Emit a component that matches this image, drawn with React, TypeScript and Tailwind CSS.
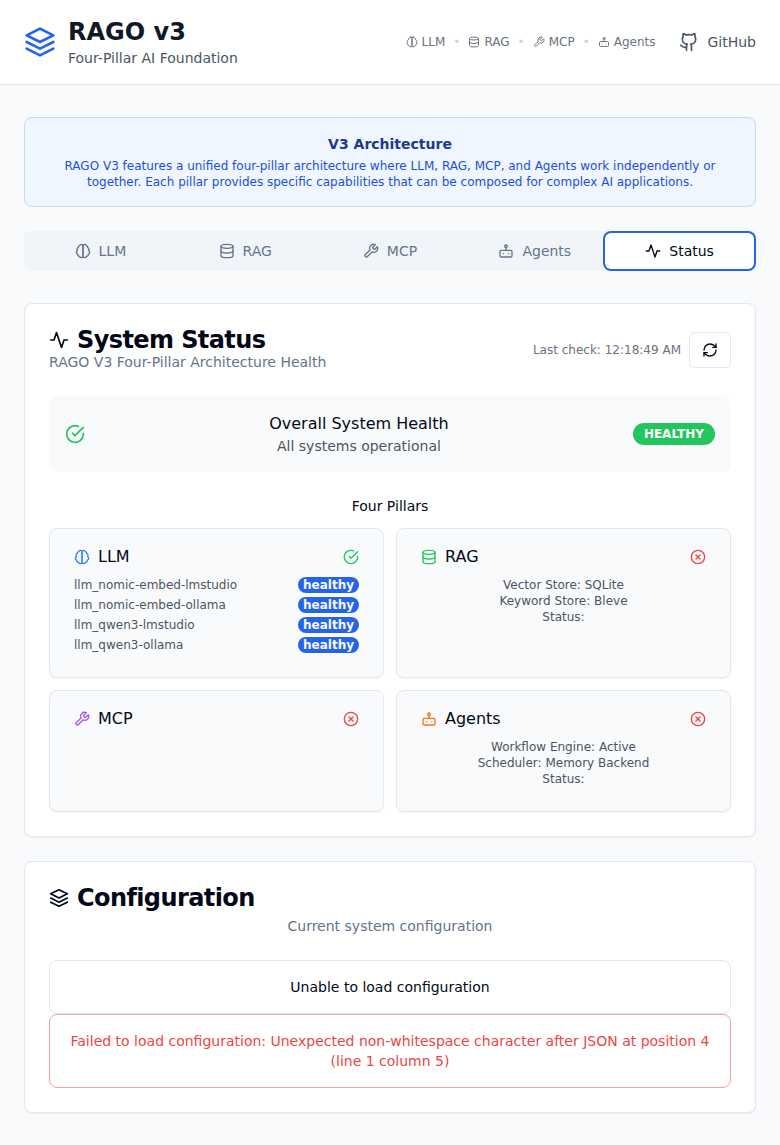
import type { ReactNode } from 'react'

type IconProps = { className?: string }

function Svg({ className = '', children }: IconProps & { children: ReactNode }) {
  return (
    <svg
      viewBox="0 0 24 24"
      fill="none"
      stroke="currentColor"
      strokeWidth={2}
      strokeLinecap="round"
      strokeLinejoin="round"
      className={`shrink-0 ${className}`}
    >
      {children}
    </svg>
  )
}

const Layers = ({ className }: IconProps) => (
  <Svg className={className}>
    <polygon points="12 2 2 7 12 12 22 7 12 2" />
    <polyline points="2 17 12 22 22 17" />
    <polyline points="2 12 12 17 22 12" />
  </Svg>
)

const Brain = ({ className }: IconProps) => (
  <Svg className={className}>
    <path d="M9.5 2A2.5 2.5 0 0 1 12 4.5v15a2.5 2.5 0 0 1-4.96.44 2.5 2.5 0 0 1-2.96-3.08 3 3 0 0 1-.34-5.58 2.5 2.5 0 0 1 1.32-4.24 2.5 2.5 0 0 1 1.98-3A2.5 2.5 0 0 1 9.5 2Z" />
    <path d="M14.5 2A2.5 2.5 0 0 0 12 4.5v15a2.5 2.5 0 0 0 4.96.44 2.5 2.5 0 0 0 2.96-3.08 3 3 0 0 0 .34-5.58 2.5 2.5 0 0 0-1.32-4.24 2.5 2.5 0 0 0-1.98-3A2.5 2.5 0 0 0 14.5 2Z" />
  </Svg>
)

const Database = ({ className }: IconProps) => (
  <Svg className={className}>
    <ellipse cx="12" cy="5" rx="9" ry="3" />
    <path d="M3 5V19A9 3 0 0 0 21 19V5" />
    <path d="M3 12A9 3 0 0 0 21 12" />
  </Svg>
)

const Wrench = ({ className }: IconProps) => (
  <Svg className={className}>
    <path d="M14.7 6.3a1 1 0 0 0 0 1.4l1.6 1.6a1 1 0 0 0 1.4 0l3.77-3.77a6 6 0 0 1-7.94 7.94l-6.91 6.91a2.12 2.12 0 0 1-3-3l6.91-6.91a6 6 0 0 1 7.94-7.94l-3.76 3.76z" />
  </Svg>
)

const Bot = ({ className }: IconProps) => (
  <Svg className={className}>
    <rect width="18" height="10" x="3" y="11" rx="2" />
    <circle cx="12" cy="5" r="2" />
    <path d="M12 7v4" />
    <line x1="8" x2="8" y1="16" y2="16" />
    <line x1="16" x2="16" y1="16" y2="16" />
  </Svg>
)

const Activity = ({ className }: IconProps) => (
  <Svg className={className}>
    <path d="M22 12h-4l-3 9L9 3l-3 9H2" />
  </Svg>
)

const CheckCircle = ({ className }: IconProps) => (
  <Svg className={className}>
    <path d="M22 11.08V12a10 10 0 1 1-5.93-9.14" />
    <path d="m9 11 3 3L22 4" />
  </Svg>
)

const XCircle = ({ className }: IconProps) => (
  <Svg className={className}>
    <circle cx="12" cy="12" r="10" />
    <path d="m15 9-6 6" />
    <path d="m9 9 6 6" />
  </Svg>
)

const Refresh = ({ className }: IconProps) => (
  <Svg className={className}>
    <path d="M3 12a9 9 0 0 1 9-9 9.75 9.75 0 0 1 6.74 2.74L21 8" />
    <path d="M21 3v5h-5" />
    <path d="M21 12a9 9 0 0 1-9 9 9.75 9.75 0 0 1-6.74-2.74L3 16" />
    <path d="M8 16H3v5" />
  </Svg>
)

const Github = ({ className }: IconProps) => (
  <Svg className={className}>
    <path d="M15 22v-4a4.8 4.8 0 0 0-1-3.5c3 0 6-2 6-5.5.08-1.25-.27-2.48-1-3.5.28-1.15.28-2.35 0-3.5 0 0-1 0-3 1.5-2.64-.5-5.36-.5-8 0C6 2 5 2 5 2c-.3 1.15-.3 2.35 0 3.5A5.403 5.403 0 0 0 4 9c0 3.5 3 5.5 6 5.5-.39.49-.68 1.05-.85 1.65-.17.6-.22 1.23-.15 1.85v4" />
    <path d="M9 18c-4.51 2-5-2-7-2" />
  </Svg>
)

const pillars = [
  { name: 'LLM', Icon: Brain },
  { name: 'RAG', Icon: Database },
  { name: 'MCP', Icon: Wrench },
  { name: 'Agents', Icon: Bot },
]

const tabs = [...pillars, { name: 'Status', Icon: Activity }]

const providers = [
  'llm_nomic-embed-lmstudio',
  'llm_nomic-embed-ollama',
  'llm_qwen3-lmstudio',
  'llm_qwen3-ollama',
]

function Header() {
  return (
    <header className="flex items-center justify-between border-b border-[#e5e7eb] bg-white px-6 py-4">
      <div className="flex items-center gap-3">
        <Layers className="size-8 text-[#2563eb]" />
        <div>
          <h1 className="text-2xl font-bold text-[#111827]">RAGO v3</h1>
          <p className="text-sm text-[#4b5563]">Four-Pillar AI Foundation</p>
        </div>
      </div>
      <div className="flex items-center gap-6">
        <div className="flex items-center gap-2 text-xs text-[#6b7280]">
          {pillars.map(({ name, Icon }, i) => (
            <div key={name} className="flex items-center gap-2">
              {i > 0 && <span className="text-[#d1d5db]">•</span>}
              <span className="flex items-center gap-1">
                <Icon className="size-3" />
                {name}
              </span>
            </div>
          ))}
        </div>
        <a className="flex items-center gap-2 text-sm text-[#4b5563]">
          <Github className="size-5" />
          GitHub
        </a>
      </div>
    </header>
  )
}

function Tabs() {
  return (
    <div className="grid h-10 grid-cols-5 rounded-md bg-[#f1f5f9] p-1 text-sm text-[#64748b]">
      {tabs.map(({ name, Icon }) => (
        <button
          key={name}
          className={
            name === 'Status'
              ? 'flex items-center justify-center gap-2 rounded-sm bg-white text-[#020817] ring-2 ring-[#2563eb] ring-offset-2 ring-offset-white'
              : 'flex items-center justify-center gap-2'
          }
        >
          <Icon className="size-4" />
          {name}
        </button>
      ))}
    </div>
  )
}

function Pillar({
  name,
  icon,
  healthy = false,
  children,
}: {
  name: string
  icon: ReactNode
  healthy?: boolean
  children?: ReactNode
}) {
  return (
    <div className="rounded-lg border border-[#e2e8f0] bg-[#f9fafb] px-6 pt-4 pb-6 shadow-xs">
      <div className="mb-2 flex items-center justify-between">
        <div className="flex items-center gap-2">
          {icon}
          <span>{name}</span>
        </div>
        {healthy ? (
          <CheckCircle className="size-4 text-[#22c55e]" />
        ) : (
          <XCircle className="size-4 text-[#ef4444]" />
        )}
      </div>
      <div className="text-center text-xs text-[#4b5563]">{children}</div>
    </div>
  )
}

function StatusCard() {
  return (
    <section className="rounded-lg border border-[#e2e8f0] bg-white p-6 shadow-xs">
      <div className="flex items-center justify-between">
        <div>
          <h3 className="flex items-center gap-2 text-2xl leading-none font-semibold tracking-tight">
            <Activity className="size-5" />
            System Status
          </h3>
          <p className="text-sm text-[#64748b]">RAGO V3 Four-Pillar Architecture Health</p>
        </div>
        <div className="flex items-center gap-2">
          <span className="text-xs text-[#6b7280]">Last check: 12:18:49 AM</span>
          <button className="flex h-9 items-center rounded-md border border-[#e2e8f0] bg-white px-3">
            <Refresh className="size-4" />
          </button>
        </div>
      </div>

      <div className="mt-6 flex items-center justify-between rounded-lg bg-[#f9fafb] p-4">
        <CheckCircle className="size-5 text-[#22c55e]" />
        <div className="text-center">
          <p>Overall System Health</p>
          <p className="text-sm text-[#4b5563]">All systems operational</p>
        </div>
        <span className="rounded-full border border-transparent bg-[#22c55e] px-2.5 py-0.5 text-xs font-semibold text-white">
          HEALTHY
        </span>
      </div>

      <h4 className="mt-6 mb-3 text-center text-sm">Four Pillars</h4>
      <div className="grid grid-cols-2 gap-3">
        <Pillar name="LLM" healthy icon={<Brain className="size-4 text-[#3b82f6]" />}>
          <div className="flex flex-col gap-1">
            {providers.map((provider) => (
              <div key={provider} className="flex items-center justify-between">
                <span>{provider}</span>
                <span className="flex h-4 items-center rounded-full bg-[#2563eb] px-[5px] font-semibold text-[#f8fafc]">
                  healthy
                </span>
              </div>
            ))}
          </div>
        </Pillar>
        <Pillar name="RAG" icon={<Database className="size-4 text-[#22c55e]" />}>
          <p>Vector Store: SQLite</p>
          <p>Keyword Store: Bleve</p>
          <p>Status:</p>
        </Pillar>
        <Pillar name="MCP" icon={<Wrench className="size-4 text-[#a855f7]" />} />
        <Pillar name="Agents" icon={<Bot className="size-4 text-[#f97316]" />}>
          <p>Workflow Engine: Active</p>
          <p>Scheduler: Memory Backend</p>
          <p>Status:</p>
        </Pillar>
      </div>
    </section>
  )
}

function ConfigurationCard() {
  return (
    <section className="mt-6 rounded-lg border border-[#e2e8f0] bg-white p-6 shadow-xs">
      <h3 className="flex items-center gap-2 text-2xl leading-none font-semibold tracking-tight">
        <Layers className="size-5" />
        Configuration
      </h3>
      <p className="mt-1.5 mb-6 text-center text-sm text-[#64748b]">Current system configuration</p>
      <div className="rounded-lg border border-[#e2e8f0] p-4 text-center text-sm">
        Unable to load configuration
      </div>
      <div className="rounded-lg border border-[#ef4444]/50 p-4 text-center text-sm text-[#ef4444]">
        Failed to load configuration: Unexpected non-whitespace character after JSON at position 4
        (line 1 column 5)
      </div>
    </section>
  )
}

export default function App() {
  return (
    <div className="min-h-screen bg-[#f9fafb] font-['DejaVu_Sans',sans-serif] text-[#020817]">
      <Header />
      <main className="px-6 py-8">
        <div className="mb-6 rounded-lg border border-[#bfdbfe] bg-[#eff6ff] p-4 text-center">
          <h2 className="mb-1 text-sm font-semibold text-[#1e3a8a]">V3 Architecture</h2>
          <p className="text-xs text-[#1d4ed8]">
            RAGO V3 features a unified four-pillar architecture where LLM, RAG, MCP, and Agents work
            independently or together. Each pillar provides specific capabilities that can be
            composed for complex AI applications.
          </p>
        </div>
        <Tabs />
        <div className="mt-8">
          <StatusCard />
          <ConfigurationCard />
        </div>
      </main>
    </div>
  )
}
